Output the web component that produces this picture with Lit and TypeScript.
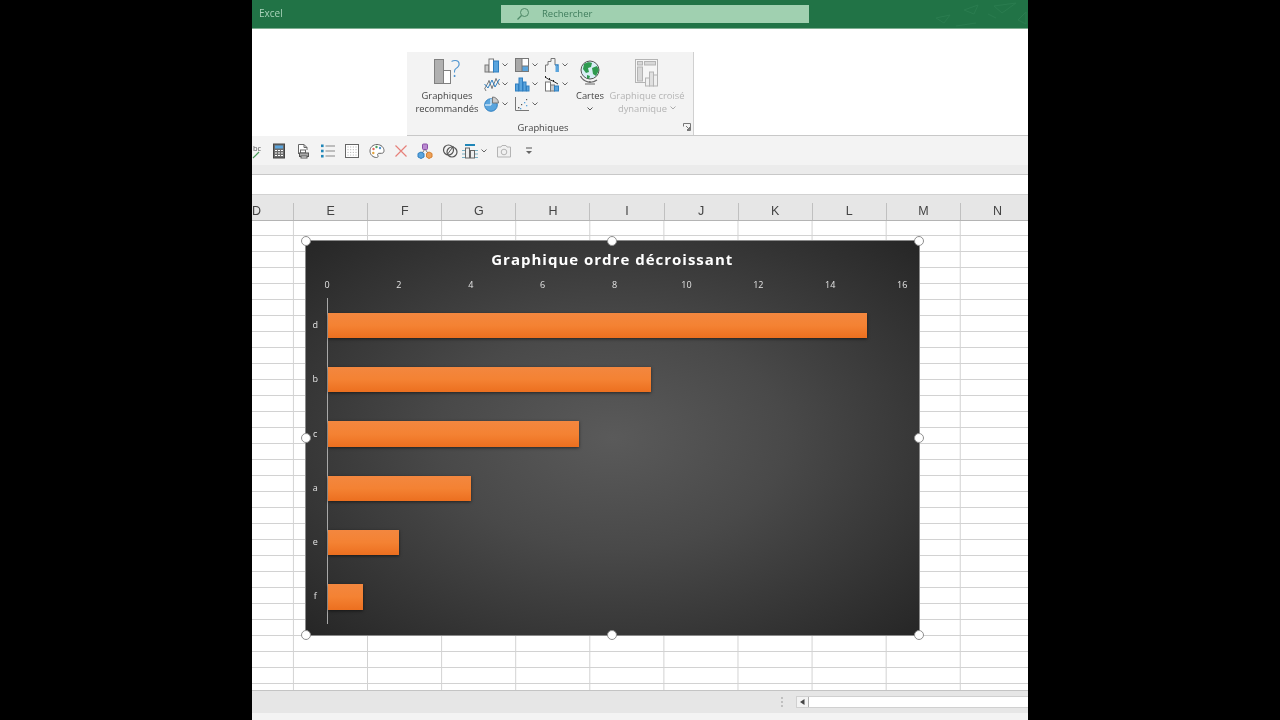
import { LitElement, html, css, svg } from "lit";
import { customElement } from "lit/decorators.js";

const G = "#a8a8a8", GD = "#777", B = "#5aa5de", BD = "#2f7fc0";
const ic = (body: unknown, s = 16, vb = 16) =>
  html`<svg class="ic" width=${s} height=${s} viewBox="0 0 ${vb} ${vb}" fill="none">${body}</svg>`;

const chartIcons = [
  svg`<rect x="1" y="8" width="4" height="7" fill="#ccc" stroke=${GD}/><rect x="5" y="2" width="4.5" height="13" fill="#fff" stroke=${GD}/><rect x="9.5" y="4" width="5" height="11" fill=${B} stroke=${BD}/>`,
  svg`<rect x="1.5" y="1.5" width="13" height="13" fill="#fff" stroke=${GD}/><rect x="2" y="2" width="6" height="12" fill=${G}/><rect x="8" y="9" width="6" height="5" fill=${B}/><path d="M8 1.5v13M8 9h6.5" stroke=${GD}/>`,
  svg`<path d="M1.5 15V8H4V4.5h3V1.5h4V8" stroke=${GD} fill="none"/><path d="M11 8h3v7" stroke=${BD} stroke-width="1.4"/><rect x="11.5" y="9" width="3" height="6" fill=${B}/>`,
  svg`<path d="M0.5 13 5 5l3 7 4-9 3.5 6" stroke=${GD}/><path d="M0.5 8 4 12l4-8 3 7 4.5-8" stroke=${BD}/><path d="M1 13l1 2M5 4v2M8 11v2M12 2v2" stroke=${GD}/>`,
  svg`<rect x="1.5" y="8" width="3" height="7" fill=${B} stroke=${BD}/><rect x="5" y="2" width="3.5" height="13" fill=${B} stroke=${BD}/><rect x="9" y="6" width="3" height="9" fill=${B} stroke=${BD}/><rect x="12.5" y="10" width="2.5" height="5" fill=${B} stroke=${BD}/>`,
  svg`<path d="M1 1l4 2.5L9 5l5 3" stroke="#333"/><path d="M1 1h1M5 3h1M9 5h1" stroke="#222" stroke-width="2"/><rect x="1.5" y="6" width="5" height="9" fill="#fff" stroke=${GD}/><rect x="6.5" y="9" width="4" height="6" fill="#ccc" stroke=${GD}/><rect x="10.5" y="10" width="4" height="5" fill=${B} stroke=${BD}/>`,
  svg`<circle cx="7" cy="9" r="6.3" fill=${B} stroke=${BD}/><path d="M7 2.7V9H1" fill="none" stroke="#fff"/><path d="M8.5 1a6 6 0 0 1 6 6h-6z" fill="#ccc" stroke=${GD}/>`,
  svg`<path d="M1.5 1v13.5H15" stroke=${GD}/><g fill="#555"><rect x="4" y="11" width="1.4" height="1.4"/><rect x="7" y="8" width="1.2" height="1.2"/><rect x="12" y="3" width="1.2" height="1.2"/></g><g fill=${B}><rect x="6" y="12" width="1.3" height="1.3"/><rect x="10" y="6" width="1.3" height="1.3"/><rect x="12" y="9" width="1.3" height="1.3"/></g>`,
];

const chev = html`<svg class="chev" width="6" height="4" viewBox="0 0 6 4" fill="none"><path d="M.5.5 3 3 5.5.5" stroke="#666"/></svg>`;

const tools = [
  svg`<path d="M6 15l6-6" stroke="#4a9a5a" stroke-width="1.2"/><text x="6" y="8" font-size="7.5" font-family="Open Sans" fill="#555">bc</text>`,
  svg`<rect x="2.5" y="1" width="11" height="14" fill="#6b6b6b" stroke="#444"/><rect x="4" y="2.5" width="8" height="3" fill="#5aa5de"/><path d="M4 7.5h2M7 7.5h2M10 7.5h2M4 10h2M7 10h2M10 10h2M4 12.5h2M7 12.5h2M10 12.5h2" stroke="#fff"/>`,
  svg`<path d="M3.5 11V1.5H9L12 4.5V7M9 1.5v3h3" stroke="#666" fill="#fff"/><rect x="5.5" y="7" width="5" height="3" fill="#fff" stroke="#666"/><rect x="4.5" y="10" width="9" height="3.5" fill="#aaa" stroke="#555"/><rect x="6" y="13" width="6" height="2" fill="#fff" stroke="#555"/>`,
  svg`<path d="M5.5 3H15M5.5 8H15M5.5 13H15" stroke="#888" stroke-width="1.2"/><rect x="1" y="1.5" width="2.6" height="2.6" fill="#1f86b8"/><rect x="1" y="6.7" width="2.6" height="2.6" fill="#1f86b8"/><rect x="1" y="11.9" width="2.6" height="2.6" fill="#1f86b8"/>`,
  svg`<rect x="1.5" y="1.5" width="13" height="13" fill="#fff" stroke="#666"/><path d="M4 3.5v9M6.7 3.5v9M9.3 3.5v9M12 3.5v9" stroke="#aaa" stroke-dasharray="1 1.7"/>`,
  svg`<path d="M8 1.5C4 1.5 1 4.3 1 8c0 3.7 3 6.5 6.5 6.5 1.7 0 1.8-1.3 1.3-2.2-.5-1 0-2 1.2-2h2.5c1.6 0 2.5-1 2.5-2.6C15 4.300 12 1.500 8 1.500z" stroke="#666" fill="#fff"/><circle cx="4.500" cy="6" r="1.200" fill="#e2685c"/><circle cx="7.500" cy="4" r="1.200" fill="#4fa05a"/><circle cx="11" cy="5" r="1.200" fill="#4f94cf"/><circle cx="4.300" cy="10" r="1.200" fill="#e3a33c"/>`,
  svg`<path d="M2.500 2.500l11 11M13.500 2.500l-11 11" stroke="#e6807a" stroke-width="1.200"/>`,
  svg`<path d="M8 6 4.500 11M8 6l3.500 5" stroke="#777"/><rect x="5.500" y="1" width="5" height="5.500" rx="1" fill="#b98ad0" stroke="#8b4fa8"/><path d="M1 10.500 4 9l3 1.500V14l-3 1.500L1 14z" fill="#5aa5de" stroke="#2f7fc0"/><path d="M9.500 10.500 12 9l3 1.500V14l-3 1.500-2.500-1.500z" fill="#eda15a" stroke="#d57f2c"/>`,
  svg`<circle cx="6.5" cy="7" r="5" stroke="#555" stroke-width="1.200"/><circle cx="10" cy="9" r="5" stroke="#555" stroke-width="1.200" fill="none"/><path d="M5 12l6.500-9" stroke="#555"/>`,
  svg`<rect x="3" y="1" width="10" height="2" fill="#1f86b8"/><path d="M0 7.500h16M0 11h16M0 14.500h16" stroke="#5aa0b8" stroke-width=".8"/><rect x="3.500" y="5" width="4" height="10" fill="#eee" stroke="#666"/><rect x="8.500" y="7.500" width="4" height="7.500" fill="#eee" stroke="#666"/>`,
  svg`<path d="M1.500 4H5l1-1.500h4L11 4h3.500v10h-13z" fill="#f0f0f0" stroke="#b4b4b4"/><circle cx="8" cy="9" r="2.800" stroke="#b4b4b4"/>`,
];

@customElement("app-root")
export class AppRoot extends LitElement {
  static styles = css`
    :host { display: flex; justify-content: center; height: 720px; background: #000; font-family: "Open Sans", "Liberation Sans", sans-serif; }
    .app { width: 776px; height: 720px; display: flex; flex-direction: column; overflow: hidden; background: #fff; position: relative; filter: blur(0.25px); }
    .title { height: 29px; flex: none; background: #217346; display: flex; align-items: center; border-bottom: 1px solid #7fae92; box-sizing: border-box; position: relative; overflow: hidden; }
    .app-name { width: 242px; margin-left: 7px; font-size: 10px; color: #a9d3ba; margin-top: -2px; flex: none; }
    .search { width: 308px; height: 18px; margin-top: -1px; background: #a0d0b0; display: flex; align-items: center; gap: 12px; padding-left: 15px; box-sizing: border-box; font-size: 9.5px; color: #3f7d5c; flex: none; }
    .leaves { margin-left: auto; flex: none; }
    .ribbon { height: 107px; flex: none; padding-left: 155px; background: #fff; display: flex; box-sizing: border-box; }
    .ribbon-in { flex: 1; padding-top: 23px; border-bottom: 1px solid #c8c8c8; }
    .group { width: 287px; height: 83px; background: #f3f3f3; border-right: 1px solid #d0d0d0; box-sizing: border-box; display: flex; flex-direction: column; color: #444; font-size: 9.4px; line-height: 13px; }
    .main { display: flex; height: 68px; padding: 6px 0 0 8px; box-sizing: border-box; }
    .btn { display: flex; flex-direction: column; align-items: center; flex: none; text-align: center; white-space: nowrap; }
    .rec { width: 64px; }
    .art { height: 31px; display: flex; align-items: flex-start; justify-content: center; flex: none; padding-top: 1px; box-sizing: border-box; }
    .q { color: #4f94cf; font-size: 23px; line-height: 22px; font-weight: 300; margin-left: -1px; margin-top: -2px; }
    .cg { margin-left: 5px; margin-top: -3px; display: grid; grid-template-columns: repeat(3, 30px); grid-auto-rows: 19.5px; flex: none; width: 90px; align-items: center; }
    .ci { display: flex; align-items: center; gap: 2px; }
    .maps { width: 30px; margin-left: 1px; }
    .pivot { width: 78px; margin-left: 3px; color: #b4b4b4; }
    .chev2 { display: block; margin-top: 5px; }
    .inline-ch { display: inline-block; margin-left: 3px; vertical-align: 2px; }
    .glabel { display: flex; align-items: center; height: 14px; padding: 0 2px 0 0; }
    .glabel span { flex: 1; text-align: center; padding-right: 4px; font-size: 9.4px; }
    .launch { flex: none; }
    .tools { height: 29px; flex: none; background: #f3f3f3; display: flex; align-items: center; margin-left: -9.5px; }
    .tool { width: 24.4px; flex: none; display: flex; justify-content: center; align-items: center; }
    .tool .ic { overflow: visible; }
    .tool.wide { width: 30px; justify-content: flex-start; gap: 3px; box-sizing: border-box; }
    .band { height: 10px; flex: none; background: #ebebeb; border-bottom: 1px solid #c8c8c8; box-sizing: border-box; }
    .formula { height: 20px; flex: none; background: #fff; border-bottom: 1px solid #d2d2d2; box-sizing: border-box; }
    .head { height: 26px; flex: none; background: #e6e6e6; border-bottom: 1px solid #b4b4b4; box-sizing: border-box; display: flex; padding-top: 8px; margin-left: -32px; width: 830px; }
    .col { width: 74.1px; height: 17px; flex: none; box-sizing: border-box; border-right: 1px solid #c0c0c0; text-align: center; font: 12.5px/17px "Liberation Sans", sans-serif; color: #444; }
    .sheet { flex: 1; position: relative; overflow: hidden;
      background-image: linear-gradient(to right, transparent 73px, #d2d2d2 73px, #d2d2d2 74.1px), linear-gradient(to bottom, transparent 15px, #d2d2d2 15px);
      background-size: 74.1px 100%, 100% 16px; background-position: -32.2px 0, 0 -1px; }
    .chart { position: absolute; left: 53px; top: 19px; width: 614.5px; height: 396px; box-sizing: border-box; border: 1px solid #8a8a8a; background: radial-gradient(ellipse at center, #5a5a5a 0%, #494949 40%, #262626 100%); color: #e4e4e4; display: flex; flex-direction: column; }
    .ctitle { height: 37px; padding-top: 8px; box-sizing: border-box; flex: none; text-align: center; font-size: 15px; line-height: 20px; font-weight: 700; letter-spacing: 1px; color: #fff; }
    .axis { height: 20.3px; flex: none; margin-left: 21px; width: 575.200px; display: flex; justify-content: space-between; font-size: 9px; line-height: 14px; }
    .tick { width: 0; display: flex; justify-content: center; white-space: nowrap; }
    .row { height: 54.300px; flex: none; display: flex; align-items: center; width: 596.5px; font-size: 9px; }
    .cat { width: 20.5px; flex: none; box-sizing: border-box; padding-right: 2px; margin-top: -2px; text-align: center; }
    .track { flex: 1; height: 100%; display: flex; align-items: center; border-left: 1px solid #a8a8a8; box-sizing: border-box; }
    .bar { height: 25.500px; background: linear-gradient(to bottom, #f3873f 0%, #f48233 50%, #ec6f1f 100%); box-shadow: 0 1px 3px rgba(0,0,0,.55); }
    .h { position: absolute; width: 10px; height: 10px; border-radius: 50%; background: #fff; border: 1.500px solid #8f8f8f; box-sizing: border-box; transform: translate(-50%, -50%); }
    .status { height: 23px; flex: none; background: #e6e6e6; border-top: 1px solid #c4c4c4; box-sizing: border-box; display: flex; align-items: center; }
    .grip { margin-left: 529px; flex: none; }
    .sb { margin-left: 13px; flex: 1; height: 12px; display: flex; background: #fff; border: 1px solid #d0d0d0; border-right: 0; box-sizing: border-box; }
    .arrow { width: 12px; flex: none; border-right: 1px solid #b0b0b0; background: #f3f3f3; display: flex; align-items: center; justify-content: center; box-sizing: border-box; }
    .foot { height: 7px; flex: none; background: #f3f3f3; }
  `;

  render() {
    const cols = "DEFGHIJKLMN".split("");
    const data: [string, number][] = [["d", 15], ["b", 9], ["c", 7], ["a", 4], ["e", 2], ["f", 1]];
    const hs = [[0, 0], [50, 0], [100, 0], [0, 50], [100, 50], [0, 100], [50, 100], [100, 100]];
    return html`<div class="app">
      <div class="title">
        <div class="app-name">Excel</div>
        <div class="search">
          <svg width="14" height="14" viewBox="0 0 14 14" fill="none"><circle cx="8.500" cy="5.500" r="4" stroke="#4f8a68"/><path d="M5.500 8.500 1.500 12.500" stroke="#4f8a68" stroke-width="1.200"/></svg>
          <span>Rechercher</span>
        </div>
        <svg class="leaves" width="100" height="28" viewBox="0 0 100 28" fill="none" stroke="#2a7c4f" stroke-width="1"><path d="M8 18l14-3-6 8zM36 10l14-5-4 9zM66 6l22-3-14 10zM90 20l8-8v12z"/><path d="M28 26l20-3M60 14l8 4"/></svg>
      </div>
      <div class="ribbon"><div class="ribbon-in"><div class="group">
        <div class="main">
          <div class="btn rec">
            <div class="art">
              <svg width="18" height="25" viewBox="0 0 18 25" fill="none"><rect x=".5" y=".5" width="9" height="24" fill="#b0b0b0" stroke="#808080"/><rect x="9.500" y="11.500" width="7" height="13" fill="#fff" stroke="#808080"/></svg>
              <span class="q">?</span>
            </div>
            <div>Graphiques<br />recommandés</div>
          </div>
          <div class="cg">
            ${chartIcons.map((b) => html`<div class="ci">${ic(b)}${chev}</div>`)}
          </div>
          <div class="btn maps">
            <div class="art">
              <svg width="24" height="26" viewBox="0 0 24 26" fill="none">
                <circle cx="12" cy="11" r="9" fill="#d8eef5" stroke="#555"/>
                <path d="M6 5c3-2 6-2 8-1l-1 4-3 1 1 4-3 1-3-4zM14 9l5-2 2 4-3 6-3-2zM9 16l3 1-1 3-2-1z" fill="#2f9a4f"/>
                <path d="M2.500 17a11 11 0 0 0 16.500 4M12 22v2M7 25h10" stroke="#666" stroke-width="1.200"/>
              </svg>
            </div>
            <div>Cartes</div>
            <svg class="chev2" width="6" height="4" viewBox="0 0 6 4" fill="none"><path d="M.5.5 3 3 5.5.5" stroke="#555"/></svg>
          </div>
          <div class="btn pivot">
            <div class="art">
              <svg width="25" height="28" viewBox="0 0 25 28" fill="none" stroke="#b4b4b4">
                <rect x=".5" y=".5" width="22" height="23" fill="#f6f6f6"/>
                <rect x="2.500" y="2.500" width="5" height="3.500" fill="#d8d8d8"/><rect x="9.500" y="2.500" width="11" height="3.500" fill="#d8d8d8"/>
                <rect x="2.500" y="8" width="5" height="14" fill="#d8d8d8"/>
                <rect x="10.500" y="19" width="4" height="8" fill="#f0f0f0"/><rect x="14.500" y="13" width="4" height="14" fill="#e0e0e0"/><rect x="18.500" y="16" width="4" height="11" fill="#f0f0f0"/>
              </svg>
            </div>
            <div>Graphique croisé<br />dynamique<svg class="inline-ch" width="6" height="4" viewBox="0 0 6 4" fill="none"><path d="M.5.5 3 3 5.5.5" stroke="#aaa"/></svg></div>
          </div>
        </div>
        <div class="glabel"><span>Graphiques</span>
          <svg class="launch" width="8" height="8" viewBox="0 0 8 8" fill="none" stroke="#777"><path d="M.5 3.500V.5H7.500V7.500H4"/><path d="M3 3l3.500 3.500M6.500 4v2.500H4"/></svg>
        </div>
      </div></div></div>
      <div class="tools">
        ${tools.slice(0, 9).map((b) => html`<div class="tool">${ic(b)}</div>`)}
        <div class="tool wide">${ic(tools[9])}${chev}</div>
        <div class="tool">${ic(tools[10])}</div>
        <div class="tool"><svg width="8" height="8" viewBox="0 0 8 8" fill="none"><path d="M1 1h6" stroke="#555"/><path d="M1 4l3 3 3-3z" fill="#666"/></svg></div>
      </div>
      <div class="band"></div>
      <div class="formula"></div>
      <div class="head">${cols.map((c) => html`<div class="col">${c}</div>`)}</div>
      <div class="sheet">
        <div class="chart">
          <div class="ctitle">Graphique ordre décroissant</div>
          <div class="axis">${[0, 2, 4, 6, 8, 10, 12, 14, 16].map((t) => html`<div class="tick">${t}</div>`)}</div>
          ${data.map(([c, v]) => html`<div class="row"><div class="cat">${c}</div><div class="track"><div class="bar" style="width:${(v / 16) * 100}%"></div></div></div>`)}
          ${hs.map(([x, y]) => html`<div class="h" style="left:${x}%;top:${y}%"></div>`)}
        </div>
      </div>
      <div class="status">
        <svg class="grip" width="2" height="10" viewBox="0 0 2 10"><path d="M1 0v2M1 4v2M1 8v2" stroke="#999"/></svg>
        <div class="sb"><div class="arrow"><svg width="5" height="6" viewBox="0 0 5 6"><path d="M4.500 0v6L0 3z" fill="#444"/></svg></div></div>
      </div>
      <div class="foot"></div>
    </div>`;
  }
}
